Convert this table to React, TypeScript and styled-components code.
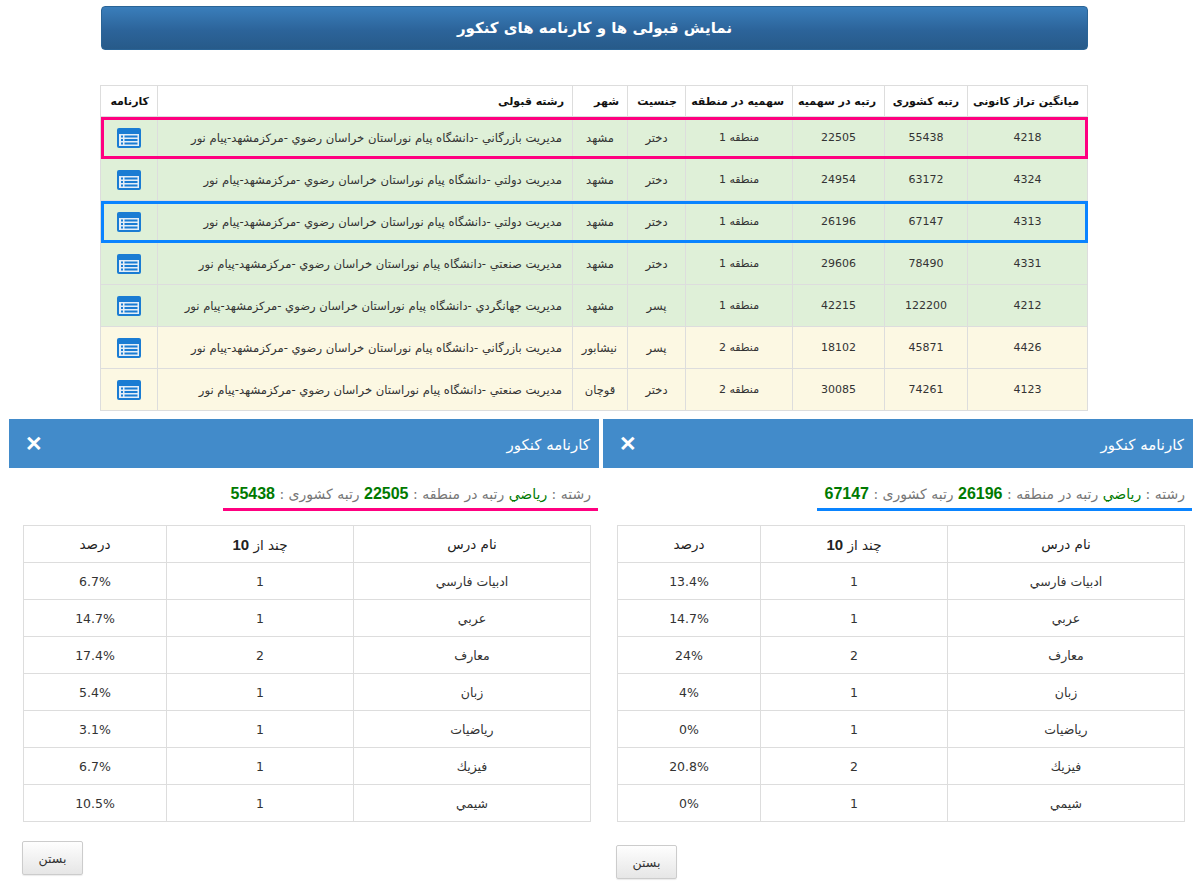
import React from "react";
import styled, { createGlobalStyle } from "styled-components";

const GlobalStyle = createGlobalStyle`
  html, body { margin: 0; padding: 0; background: #fff; }
  body { font-family: "DejaVu Sans", "Noto Sans", sans-serif; color: #333; direction: rtl; }
  * { box-sizing: border-box; }
`;

const Page = styled.div`
  width: 1203px;
  padding-top: 6px;
`;

const Top = styled.div`
  padding: 0 115px 0 101px;
`;

const TitleBar = styled.div`
  height: 44px;
  border-radius: 4px;
  border: 1px solid #2a6496;
  background: linear-gradient(to bottom, #3a7ebb 0%, #2c649a 55%, #275a89 100%);
  color: #fff;
  font-weight: bold;
  font-size: 15px;
  display: flex;
  align-items: center;
  justify-content: center;
`;

const MainTable = styled.table`
  margin-top: 35px;
  width: 988px;
  border-collapse: collapse;
  table-layout: fixed;
  font-size: 11px;
`;

const Th = styled.th<{ $w: number }>`
  width: ${(p) => p.$w}px;
  height: 31px;
  border: 1px solid #ddd;
  text-align: right;
  padding: 0 8px;
  font-weight: bold;
  color: #111;
  background: #fff;
  white-space: nowrap;
`;

const Tr = styled.tr<{ $bg: string; $hl?: string }>`
  background: ${(p) => p.$bg};
  outline: ${(p) => (p.$hl ? `3px solid ${p.$hl}` : "none")};
  outline-offset: -3px;
`;

const Td = styled.td<{ $align?: string; $fs?: number }>`
  height: 42px;
  border: 1px solid #ddd;
  text-align: ${(p) => p.$align || "center"};
  font-size: ${(p) => p.$fs || 11}px;
  padding: 0 10px;
  color: #333;
  white-space: nowrap;
`;

const IconCell = styled.td`
  height: 42px;
  border: 1px solid #ddd;
  text-align: center;
  padding: 0;
  line-height: 0;
`;

const Modals = styled.div`
  direction: ltr;
  display: flex;
  gap: 4px;
  padding: 0 10px 0 9px;
  margin-top: 8px;
`;

const Modal = styled.div`
  flex: 1;
  direction: rtl;
  background: #fff;
`;

const ModalHeader = styled.div`
  height: 49px;
  background: #428bca;
  color: #fff;
  display: flex;
  align-items: center;
  justify-content: space-between;
  padding: 0 9px 0 16px;
`;

const ModalTitle = styled.div`
  font-size: 15px;
  font-weight: normal;
  padding-top: 2px;
`;

const Close = styled.span`
  font-family: "Liberation Sans", Arial, sans-serif;
  font-weight: bold;
  font-size: 21px;
  line-height: 1;
  color: #fff;
`;

const SubRow = styled.div`
  margin-top: 16px;
  text-align: right;
  padding-right: 1px;
  line-height: 0;
`;

const Sub = styled.span<{ $c: string }>`
  display: inline-block;
  font-size: 14px;
  line-height: 20px;
  color: #777;
  padding: 0 7px 4px 8px;
  border-bottom: 3px solid ${(p) => p.$c};
`;

const Val = styled.span`
  color: #007a00;
`;

const Num = styled.span`
  color: #007a00;
  font-family: "Liberation Sans", Arial, sans-serif;
  font-weight: bold;
  font-size: 16px;
`;

const ModalBody = styled.div`
  padding: 14px 8px 0 14px;
`;

const GradeTable = styled.table`
  width: 100%;
  border-collapse: collapse;
  table-layout: fixed;
  font-size: 12.5px;
`;

const GTh = styled.th<{ $w?: number }>`
  ${(p) => (p.$w ? `width: ${p.$w}px;` : "")}
  height: 37px;
  border: 1px solid #ddd;
  text-align: center;
  font-size: 13.5px;
  font-weight: normal;
  color: #222;
`;

const Bold10 = styled.b`
  font-family: "Liberation Sans", Arial, sans-serif;
  font-size: 15px;
`;

const GTd = styled.td`
  height: 37px;
  border: 1px solid #ddd;
  text-align: center;
  color: #333;
`;

const Footer = styled.div<{ $top: number }>`
  display: flex;
  justify-content: flex-end;
  padding-top: ${(p) => p.$top}px;
  padding-bottom: 10px;
`;

const Button = styled.button`
  width: 61px;
  height: 34px;
  font-family: "DejaVu Sans", sans-serif;
  font-size: 12.5px;
  color: #333;
  border: 1px solid #ccc;
  border-radius: 2px;
  background: linear-gradient(to bottom, #fefefe 0%, #e6e6e6 100%);
  box-shadow: 0 1px 1px rgba(0, 0, 0, 0.08);
  margin-left: -1px;
`;

const ReportIcon = () => (
  <svg width="24" height="20" viewBox="0 0 24 20">
    <rect x="0" y="0" width="24" height="20" rx="2" fill="#1a7cd3" />
    <rect x="2" y="6" width="20" height="12" fill="#e4eef7" />
    <rect x="4" y="7.5" width="2" height="2" fill="#1a7cd3" />
    <rect x="4" y="11" width="2" height="2" fill="#1a7cd3" />
    <rect x="4" y="14.5" width="2" height="2" fill="#1a7cd3" />
    <rect x="7.5" y="7.5" width="13" height="2" fill="#1a7cd3" />
    <rect x="7.5" y="11" width="13" height="2" fill="#1a7cd3" />
    <rect x="7.5" y="14.5" width="13" height="2" fill="#1a7cd3" />
  </svg>
);

const GREEN = "#dff0d8";
const YELLOW = "#fcf8e3";

const rows = [
  { avg: "4218", nat: "55438", quota: "22505", region: "منطقه 1", sex: "دختر", city: "مشهد", major: "مديريت بازرگاني -دانشگاه پيام نوراستان خراسان رضوي -مرکزمشهد-پيام نور", bg: GREEN, hl: "#ff0080" },
  { avg: "4324", nat: "63172", quota: "24954", region: "منطقه 1", sex: "دختر", city: "مشهد", major: "مديريت دولتي -دانشگاه پيام نوراستان خراسان رضوي -مرکزمشهد-پيام نور", bg: GREEN },
  { avg: "4313", nat: "67147", quota: "26196", region: "منطقه 1", sex: "دختر", city: "مشهد", major: "مديريت دولتي -دانشگاه پيام نوراستان خراسان رضوي -مرکزمشهد-پيام نور", bg: GREEN, hl: "#0a84ff" },
  { avg: "4331", nat: "78490", quota: "29606", region: "منطقه 1", sex: "دختر", city: "مشهد", major: "مديريت صنعتي -دانشگاه پيام نوراستان خراسان رضوي -مرکزمشهد-پيام نور", bg: GREEN },
  { avg: "4212", nat: "122200", quota: "42215", region: "منطقه 1", sex: "پسر", city: "مشهد", major: "مديريت جهانگردي -دانشگاه پيام نوراستان خراسان رضوي -مرکزمشهد-پيام نور", bg: GREEN },
  { avg: "4426", nat: "45871", quota: "18102", region: "منطقه 2", sex: "پسر", city: "نيشابور", major: "مديريت بازرگاني -دانشگاه پيام نوراستان خراسان رضوي -مرکزمشهد-پيام نور", bg: YELLOW },
  { avg: "4123", nat: "74261", quota: "30085", region: "منطقه 2", sex: "دختر", city: "قوچان", major: "مديريت صنعتي -دانشگاه پيام نوراستان خراسان رضوي -مرکزمشهد-پيام نور", bg: YELLOW },
];

const subjects = ["ادبيات فارسي", "عربي", "معارف", "زبان", "رياضيات", "فيزيك", "شيمي"];

const reports = [
  { region: "22505", nat: "55438", color: "#ff0080", counts: ["1", "1", "2", "1", "1", "1", "1"], pct: ["6.7%", "14.7%", "17.4%", "5.4%", "3.1%", "6.7%", "10.5%"], btnTop: 19 },
  { region: "26196", nat: "67147", color: "#0a84ff", counts: ["1", "1", "2", "1", "1", "2", "1"], pct: ["13.4%", "14.7%", "24%", "4%", "0%", "20.8%", "0%"], btnTop: 23 },
];

export default function App() {
  return (
    <Page>
      <GlobalStyle />
      <Top>
        <TitleBar>نمایش قبولی ها و کارنامه های کنکور</TitleBar>
        <MainTable>
          <thead>
            <tr>
              <Th $w={120}>میانگین تراز کانونی</Th>
              <Th $w={83}>رتبه کشوری</Th>
              <Th $w={92}>رتبه در سهمیه</Th>
              <Th $w={107}>سهمیه در منطقه</Th>
              <Th $w={58}>جنسیت</Th>
              <Th $w={55}>شهر</Th>
              <Th $w={415}>رشته قبولی</Th>
              <Th $w={57}>کارنامه</Th>
            </tr>
          </thead>
          <tbody>
            {rows.map((r, i) => (
              <Tr key={i} $bg={r.bg} $hl={r.hl}>
                <Td>{r.avg}</Td>
                <Td>{r.nat}</Td>
                <Td>{r.quota}</Td>
                <Td>{r.region}</Td>
                <Td $fs={11.5}>{r.sex}</Td>
                <Td $fs={11.5}>{r.city}</Td>
                <Td $align="right" $fs={11.6}>{r.major}</Td>
                <IconCell>
                  <ReportIcon />
                </IconCell>
              </Tr>
            ))}
          </tbody>
        </MainTable>
      </Top>
      <Modals>
        {reports.map((rep, k) => (
          <Modal key={k}>
            <ModalHeader>
              <ModalTitle>کارنامه کنکور</ModalTitle>
              <Close>✕</Close>
            </ModalHeader>
            <SubRow>
              <Sub $c={rep.color}>
                رشته : <Val>رياضي</Val> رتبه در منطقه : <Num>{rep.region}</Num> رتبه کشوری : <Num>{rep.nat}</Num>
              </Sub>
            </SubRow>
            <ModalBody>
              <GradeTable>
                <thead>
                  <tr>
                    <GTh>نام درس</GTh>
                    <GTh $w={187}>
                      چند از <Bold10>10</Bold10>
                    </GTh>
                    <GTh $w={143}>درصد</GTh>
                  </tr>
                </thead>
                <tbody>
                  {subjects.map((s, i) => (
                    <tr key={s}>
                      <GTd>{s}</GTd>
                      <GTd>{rep.counts[i]}</GTd>
                      <GTd>{rep.pct[i]}</GTd>
                    </tr>
                  ))}
                </tbody>
              </GradeTable>
              <Footer $top={rep.btnTop}>
                <Button>بستن</Button>
              </Footer>
            </ModalBody>
          </Modal>
        ))}
      </Modals>
    </Page>
  );
}
